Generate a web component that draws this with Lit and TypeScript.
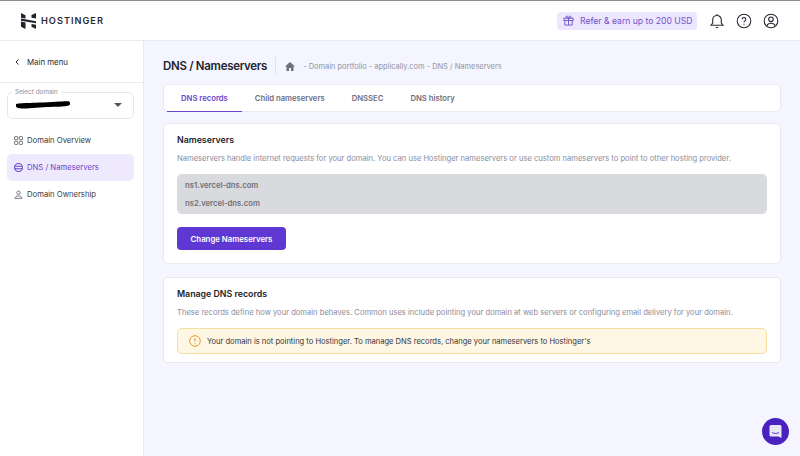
import { LitElement, html, css } from "lit";
import { customElement } from "lit/decorators.js";

@customElement("app-root")
export class AppRoot extends LitElement {
  static styles = css`
    :host { display: block; width: 800px; height: 456px; overflow: hidden; font-family: Inter, "Open Sans", sans-serif; color: #2f1c6a; background: #f4f5ff; }
    * { box-sizing: border-box; }
    .page { position: relative; height: 456px; display: flex; flex-direction: column; }
    .top { height: 41px; flex: none; display: flex; align-items: center; background: #fff; border-top: 1px solid #8e8e90; border-bottom: 1px solid #e8e9f2; padding: 0 20px 0 21px; }
    .logo { display: flex; align-items: center; gap: 5px; }
    .logo-text { font-size: 9.2px; font-weight: 600; letter-spacing: 1px; color: #2a2a33; }
    .top-right { margin-left: auto; display: flex; align-items: center; }
    .refer { width: 140px; height: 18px; border-radius: 4px; background: #ece6ff; display: flex; align-items: center; gap: 6px; padding-left: 6px; color: #6f52c8; font-size: 8.6px; white-space: nowrap; margin-right: 12px; }
    .icons { display: flex; gap: 11px; margin-right: 1px; color: #2a2a33; }
    .body { flex: 1; display: flex; min-height: 0; }
    .side { width: 144px; flex: none; background: #fff; border-right: 1px solid #e8e9f2; }
    .back { height: 42px; display: flex; align-items: center; gap: 8px; padding: 1px 0 0 15px; border-bottom: 1px solid #e8e9f2; font-size: 7.85px; color: #2a2a33; }
    .select { position: relative; margin: 9px 9px 8px 7px; height: 27px; border: 1px solid #e6e7f0; border-radius: 5px; display: flex; align-items: center; justify-content: space-between; padding: 0 11px 1px 8px; }
    .legend { position: absolute; left: 4px; top: -5px; padding: 0 3px; background: #fff; font-size: 6.4px; line-height: 9px; color: #8f8f9c; }
    .caret { width: 0; height: 0; border-left: 4px solid transparent; border-right: 4px solid transparent; border-top: 4px solid #55555f; }
    .nav { padding: 0 9px 0 7px; }
    .item { height: 27px; border-radius: 5px; display: flex; align-items: center; gap: 4px; padding-left: 7px; font-size: 7.7px; color: #3a3a46; }
    .item.on { background: #efe9fd; color: #6a45c8; }
    .main { flex: 1; padding: 16px 19px 0 19px; min-width: 0; }
    .head { height: 18px; display: flex; align-items: center; margin-bottom: 9px; }
    h1 { margin: 0; font-size: 11.5px; letter-spacing: -0.3px; font-weight: 600; color: #23232b; white-space: nowrap; }
    .sep { width: 1px; height: 18px; background: #e0e1ea; margin: 0 9px 0 8px; }
    .crumb { display: flex; align-items: center; gap: 8px; font-size: 7.45px; color: #9293a3; white-space: nowrap; }
    .tabs { height: 28px; background: #fff; border: 1px solid #e8e9f2; border-radius: 5px; display: flex; padding-left: 3px; margin-bottom: 11px; }
    .tab { padding: 0 14px; height: 27px; display: flex; align-items: center; font-size: 7.7px; font-weight: 600; color: #6f6f7d; white-space: nowrap; margin-right: -1px; }
    .tab.on { color: #6a45c8; border-bottom: 1.5px solid #6a45c8; }
    .card { background: #fff; border: 1px solid #e8e9f2; border-radius: 5px; padding: 9px 13px 13px; margin-bottom: 13px; }
    .card.tight { padding-bottom: 8px; }
    h2 { margin: 0; font-size: 8.8px; line-height: 13px; font-weight: 600; color: #23232b; }
    p { margin: 7px 0 0; font-size: 7.6px; line-height: 11px; color: #8b8c9c; white-space: nowrap; }
    .ns { margin-top: 10px; height: 40px; border-radius: 5px; background: #d9dade; padding: 2px 8px; display: flex; flex-direction: column; justify-content: space-around; font-size: 7.7px; font-weight: 600; color: #6f7079; }
    button { display: block; margin-top: 13px; width: 109px; height: 23px; border: 0; border-radius: 4px; background: #5f37d3; color: #fff; font: 600 7.8px Inter, sans-serif; }
    .alert { margin-top: 10px; height: 26px; display: flex; align-items: center; gap: 6px; padding-left: 11px; border: 1px solid #f6dfa0; border-radius: 5px; background: #fdf7e3; font-size: 7.55px; color: #33333d; white-space: nowrap; }
    .chat { position: absolute; left: 762px; top: 418px; width: 27px; height: 27px; border-radius: 50%; background: #4a22bf; display: flex; align-items: center; justify-content: center; }
  `;

  render() {
    return html`<div class="page">
      <header class="top">
        <div class="logo">
          <svg width="15" height="16" viewBox="0 0 15 16" fill="#23232b"><path d="M0 0l4.500 2.200v3.300L0 4.700zM15 0v5.500l-4.500-.8V2zM0 5.600l15 2.700v2L0 7.700zM0 8.600l4.500.8V16L0 13.800zM10.500 11l4.500.8V16l-4.500-2.200z"/></svg>
          <span class="logo-text">HOSTINGER</span>
        </div>
        <div class="top-right">
          <div class="refer">
            <svg width="11" height="11" viewBox="0 0 12 12" fill="none" stroke="#6f52c8" stroke-width="1"><rect x="1" y="3.500" width="10" height="2.500"/><path d="M2 6v5h8V6M6 3.500V11M6 3.500C4 3.500 3 2.800 3.500 1.500S6 2 6 3.500C6 2 8 .2 8.500 1.500S8 3.500 6 3.500z"/></svg>
            Refer &amp; earn up to 200 USD
          </div>
          <div class="icons">
            <svg width="16" height="16" viewBox="0 0 16 16" fill="none" stroke="currentColor" stroke-width="1.100"><path d="M2 12.200h12l-1.700-2.200V6.800a4.300 4.300 0 0 0-8.600 0V10zM6.800 14.500h2.400M8 1v1.400"/></svg>
            <svg width="16" height="16" viewBox="0 0 16 16" fill="none" stroke="currentColor" stroke-width="1.100"><circle cx="8" cy="8" r="6.800"/><path d="M6.200 6.300a1.800 1.800 0 1 1 2.700 1.600c-.6.300-.9.700-.9 1.400M8 10.800v1"/></svg>
            <svg width="16" height="16" viewBox="0 0 16 16" fill="none" stroke="currentColor" stroke-width="1.100"><circle cx="8" cy="8" r="6.800"/><circle cx="8" cy="6.300" r="2.300"/><path d="M3.800 12.700c.8-1.800 2.300-2.500 4.200-2.500s3.400.7 4.200 2.500"/></svg>
          </div>
        </div>
      </header>
      <div class="body">
        <aside class="side">
          <div class="back">
            <svg width="4" height="6" viewBox="0 0 4 6" fill="none" stroke="#2a2a33" stroke-width="1"><path d="M3.500.5L1 3l2.500 2.500"/></svg>
            Main menu
          </div>
          <div class="select">
            <span class="legend">Select domain</span>
            <svg width="54" height="8" viewBox="0 0 54 8"><path d="M0 3C3 1.800 8 2.300 14 2S34 1.400 44 .6 53.500 0 54 2.200 52 5 46 5.400 30 5.800 20 6.800 3 8 1 6.500 0 3.600 0 3z" fill="#000"/></svg>
            <span class="caret"></span>
          </div>
          <nav class="nav">
            <div class="item">
              <svg width="9" height="9" viewBox="0 0 8 8" fill="none" stroke="#55555f" stroke-width=".7"><rect x=".5" y=".5" width="2.800" height="2.800" rx=".5"/><rect x="4.700" y=".5" width="2.800" height="2.800" rx=".5"/><rect x=".5" y="4.700" width="2.800" height="2.800" rx=".5"/><rect x="4.700" y="4.700" width="2.800" height="2.800" rx=".5"/></svg>
              Domain Overview
            </div>
            <div class="item on">
              <svg width="9" height="9" viewBox="0 0 8 8" fill="none" stroke="#6a45c8" stroke-width=".9"><circle cx="4" cy="4" r="3.500"/><path d="M.5 2.800h7M.5 5.200h7"/></svg>
              DNS / Nameservers
            </div>
            <div class="item">
              <svg width="9" height="9" viewBox="0 0 8 8" fill="none" stroke="#55555f" stroke-width=".7"><circle cx="4" cy="2.400" r="1.500"/><path d="M.8 7.400c.3-1.500 1.400-2.200 3.200-2.200s2.900.7 3.200 2.200z"/></svg>
              Domain Ownership
            </div>
          </nav>
        </aside>
        <main class="main">
          <div class="head">
            <h1>DNS / Nameservers</h1>
            <span class="sep"></span>
            <div class="crumb">
              <svg width="10" height="9" viewBox="0 0 10 9" fill="#6f6f7d"><path d="M5 0l5 4.500H8.500V9H6V6H4v3H1.500V4.500H0z"/></svg>
              <span>- Domain portfolio - applically.com - DNS / Nameservers</span>
            </div>
          </div>
          <div class="tabs">
            <div class="tab on">DNS records</div>
            <div class="tab">Child nameservers</div>
            <div class="tab">DNSSEC</div>
            <div class="tab">DNS history</div>
          </div>
          <section class="card">
            <h2>Nameservers</h2>
            <p>Nameservers handle internet requests for your domain. You can use Hostinger nameservers or use custom nameservers to point to other hosting provider.</p>
            <div class="ns"><span>ns1.vercel-dns.com</span><span>ns2.vercel-dns.com</span></div>
            <button>Change Nameservers</button>
          </section>
          <section class="card tight">
            <h2>Manage DNS records</h2>
            <p>These records define how your domain behaves. Common uses include pointing your domain at web servers or configuring email delivery for your domain.</p>
            <div class="alert">
              <svg width="12" height="12" viewBox="0 0 12 12" fill="none" stroke="#e69a2e" stroke-width="1"><circle cx="6" cy="6" r="5.300"/><path d="M6 3v3.600M6 8.200v1"/></svg>
              Your domain is not pointing to Hostinger. To manage DNS records, change your nameservers to Hostinger's
            </div>
          </section>
        </main>
      </div>
      <div class="chat">
        <svg width="13" height="15" viewBox="0 0 13 15"><path d="M2 1h9a1.500 1.500 0 0 1 1.500 1.500v11.500l-3-1.500H2A1.500 1.500 0 0 1 .5 11V2.500A1.500 1.500 0 0 1 2 1z" fill="#e9e6f6"/><path d="M3 8.500c2 1.300 5 1.300 7 0" fill="none" stroke="#4a22bf" stroke-width=".9"/></svg>
      </div>
    </div>`;
  }
}
